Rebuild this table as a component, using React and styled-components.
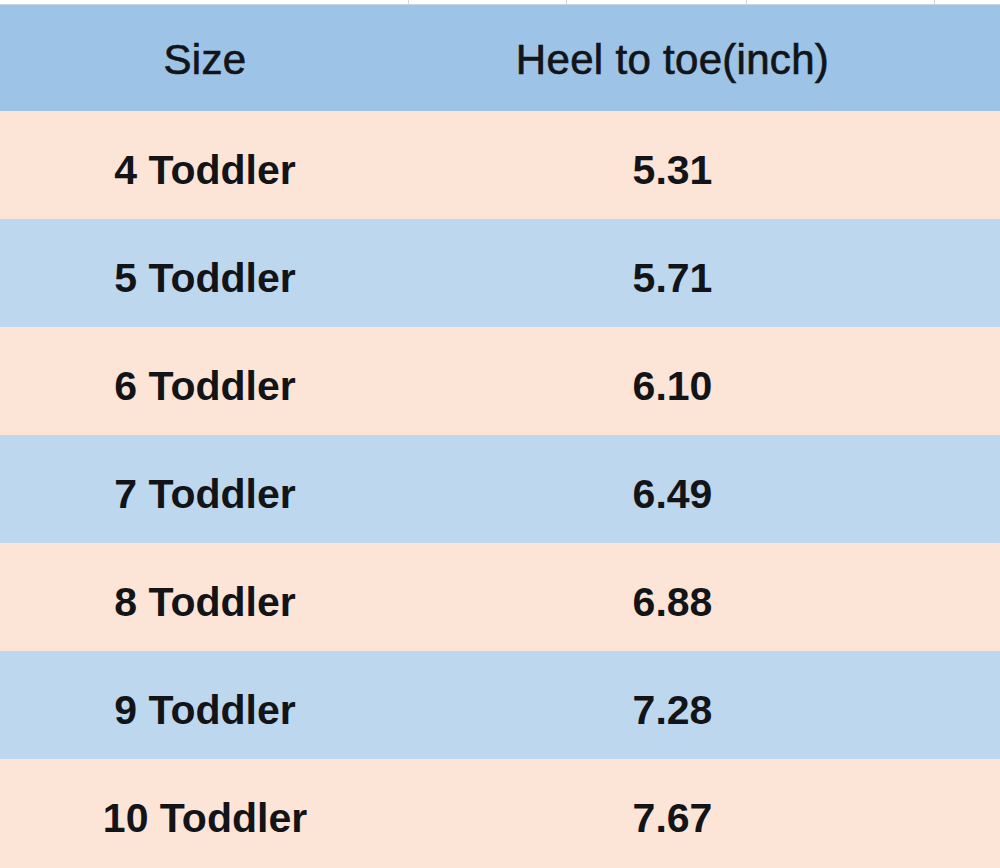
import styled, { createGlobalStyle } from "styled-components";

const GlobalStyle = createGlobalStyle`
  html, body {
    margin: 0;
    padding: 0;
    background: #ffffff;
  }
  body {
    font-family: "Liberation Sans", Arial, sans-serif;
    color: #111111;
  }
`;

const Page = styled.div`
  width: 1000px;
  height: 868px;
  overflow: hidden;
  display: flex;
  flex-direction: column;
`;

const Strip = styled.div`
  height: 4px;
  display: grid;
  grid-template-columns: 409px 158px 180px 188px 65px;
  border-bottom: 1px solid #c9d3dc;
`;

const StripCell = styled.div`
  border-right: 1px solid #d6d6d6;
  &:last-child {
    border-right: none;
  }
`;

const Table = styled.div`
  display: grid;
  grid-template-columns: 410px 525px 65px;
  grid-template-rows: 106px repeat(6, 108px) 109px;
`;

const Cell = styled.div`
  background: ${(p) => p.$bg};
  display: flex;
  align-items: center;
  justify-content: center;
  box-sizing: border-box;
  color: #121418;
  font-size: 41px;
  font-weight: 700;
  padding-top: 10px;
`;

const HeadCell = styled(Cell)`
  font-size: 42px;
  font-weight: 400;
  padding-top: 4px;
  -webkit-text-stroke: 0.7px #121418;
  letter-spacing: 0.3px;
`;

const HEAD = "#9dc3e6";
const PEACH = "#fce4d6";
const BLUE = "#bdd7ee";

const rows = [
  ["4 Toddler", "5.31"],
  ["5 Toddler", "5.71"],
  ["6 Toddler", "6.10"],
  ["7 Toddler", "6.49"],
  ["8 Toddler", "6.88"],
  ["9 Toddler", "7.28"],
  ["10 Toddler", "7.67"],
];

export default function App() {
  return (
    <Page>
      <GlobalStyle />
      <Strip>
        <StripCell />
        <StripCell />
        <StripCell />
        <StripCell />
        <StripCell />
      </Strip>
      <Table>
        <HeadCell $bg={HEAD}>Size</HeadCell>
        <HeadCell $bg={HEAD}>Heel to toe(inch)</HeadCell>
        <HeadCell $bg={HEAD} />
        {rows.map(([size, len], i) => {
          const bg = i % 2 === 0 ? PEACH : BLUE;
          return [
            <Cell key={size + "a"} $bg={bg}>{size}</Cell>,
            <Cell key={size + "b"} $bg={bg}>{len}</Cell>,
            <Cell key={size + "c"} $bg={bg} />,
          ];
        })}
      </Table>
    </Page>
  );
}
